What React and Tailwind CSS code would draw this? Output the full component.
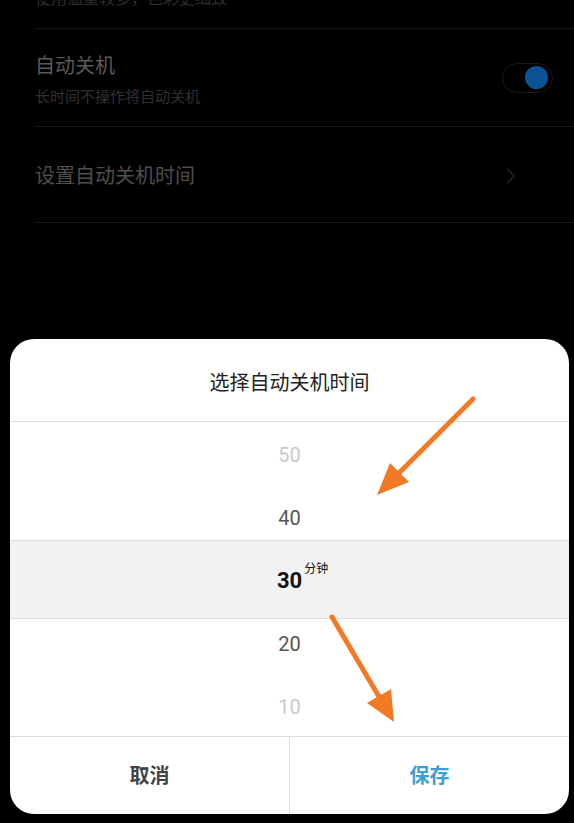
import { ChevronRight } from "lucide-react";

const font = { fontFamily: 'Roboto, "Noto Sans CJK SC", sans-serif' };

export default function App() {
  return (
    <div
      className="relative h-[823px] w-full overflow-hidden bg-black"
      style={font}
    >
      {/* Settings list behind the dialog */}
      <div className="pl-[35px]">
        <div className="h-[29px] overflow-hidden border-b border-[#161616]">
          <p className="-mt-[12px] text-[16px] leading-[22px] text-[#2e2e2e]">
            使用温量较多，色彩更细致
          </p>
        </div>

        <div className="flex h-[98px] items-center justify-between border-b border-[#161616] pr-[21px]">
          <div className="flex flex-col pt-[6px]">
            <span className="text-[20px] leading-[24px] text-[#5a5a5a]">自动关机</span>
            <span className="mt-[9px] text-[15px] leading-[20px] text-[#303030]">
              长时间不操作将自动关机
            </span>
          </div>
          <div className="flex h-[30px] w-[51px] items-center justify-end rounded-full border border-[#221616] pr-[4px]">
            <div className="h-[23px] w-[23px] rounded-full bg-[#0c5297]" />
          </div>
        </div>

        <div className="flex h-[96px] items-center justify-between border-b border-[#161616] pr-[50px] pt-[3px]">
          <span className="text-[20px] leading-[24px] text-[#4e4e4e]">设置自动关机时间</span>
          <ChevronRight size={26} strokeWidth={1.2} className="text-[#2a2a2a]" />
        </div>
      </div>

      {/* Dialog */}
      <div className="ml-[10px] mt-[116px] w-[559px] overflow-hidden rounded-[24px] bg-white">
        <div className="flex h-[83px] items-center justify-center border-b border-[#dcdcdc] pt-[6px]">
          <span className="text-[20px] text-[#222]">选择自动关机时间</span>
        </div>

        <div className="flex flex-col text-[20px]">
          <div className="flex h-[59px] items-center justify-center pt-[7px] text-[#c9c9c9]">50</div>
          <div className="flex h-[59px] items-end justify-center pb-[7px] text-[#555]">40</div>
          <div className="flex h-[79px] items-center justify-center border-y border-[#dcdcdc] bg-[#f2f2f2] pt-[2px]">
            <span className="relative text-[22px] font-bold text-[#111]">
              30
              <span className="absolute left-full top-[-3px] ml-[2px] whitespace-nowrap text-[12px] leading-[16px] font-normal text-[#111]">
                分钟
              </span>
            </span>
          </div>
          <div className="flex h-[59px] items-start justify-center pt-[10px] text-[#555]">20</div>
          <div className="flex h-[58px] items-center justify-center text-[#c9c9c9]">10</div>
        </div>

        <div className="flex h-[78px] border-t border-[#dcdcdc]">
          <button className="flex flex-1 items-center justify-center border-r border-[#dcdcdc] text-[20px] font-bold text-[#444]">
            取消
          </button>
          <button className="flex flex-1 items-center justify-center text-[20px] font-bold text-[#3aa0d4]">
            保存
          </button>
        </div>
      </div>

      {/* Annotation arrows */}
      <svg
        className="pointer-events-none absolute left-0 top-0"
        width="574"
        height="823"
        viewBox="0 0 574 823"
      >
        <line x1="473" y1="399" x2="395" y2="477" stroke="#f27a26" strokeWidth="5" strokeLinecap="round" />
        <polygon points="377,495 409,482 390,463" fill="#f27a26" />
        <line x1="332" y1="617" x2="381" y2="700" stroke="#f27a26" strokeWidth="5" strokeLinecap="round" />
        <polygon points="394,722 391,689 367,703" fill="#f27a26" />
      </svg>
    </div>
  );
}
